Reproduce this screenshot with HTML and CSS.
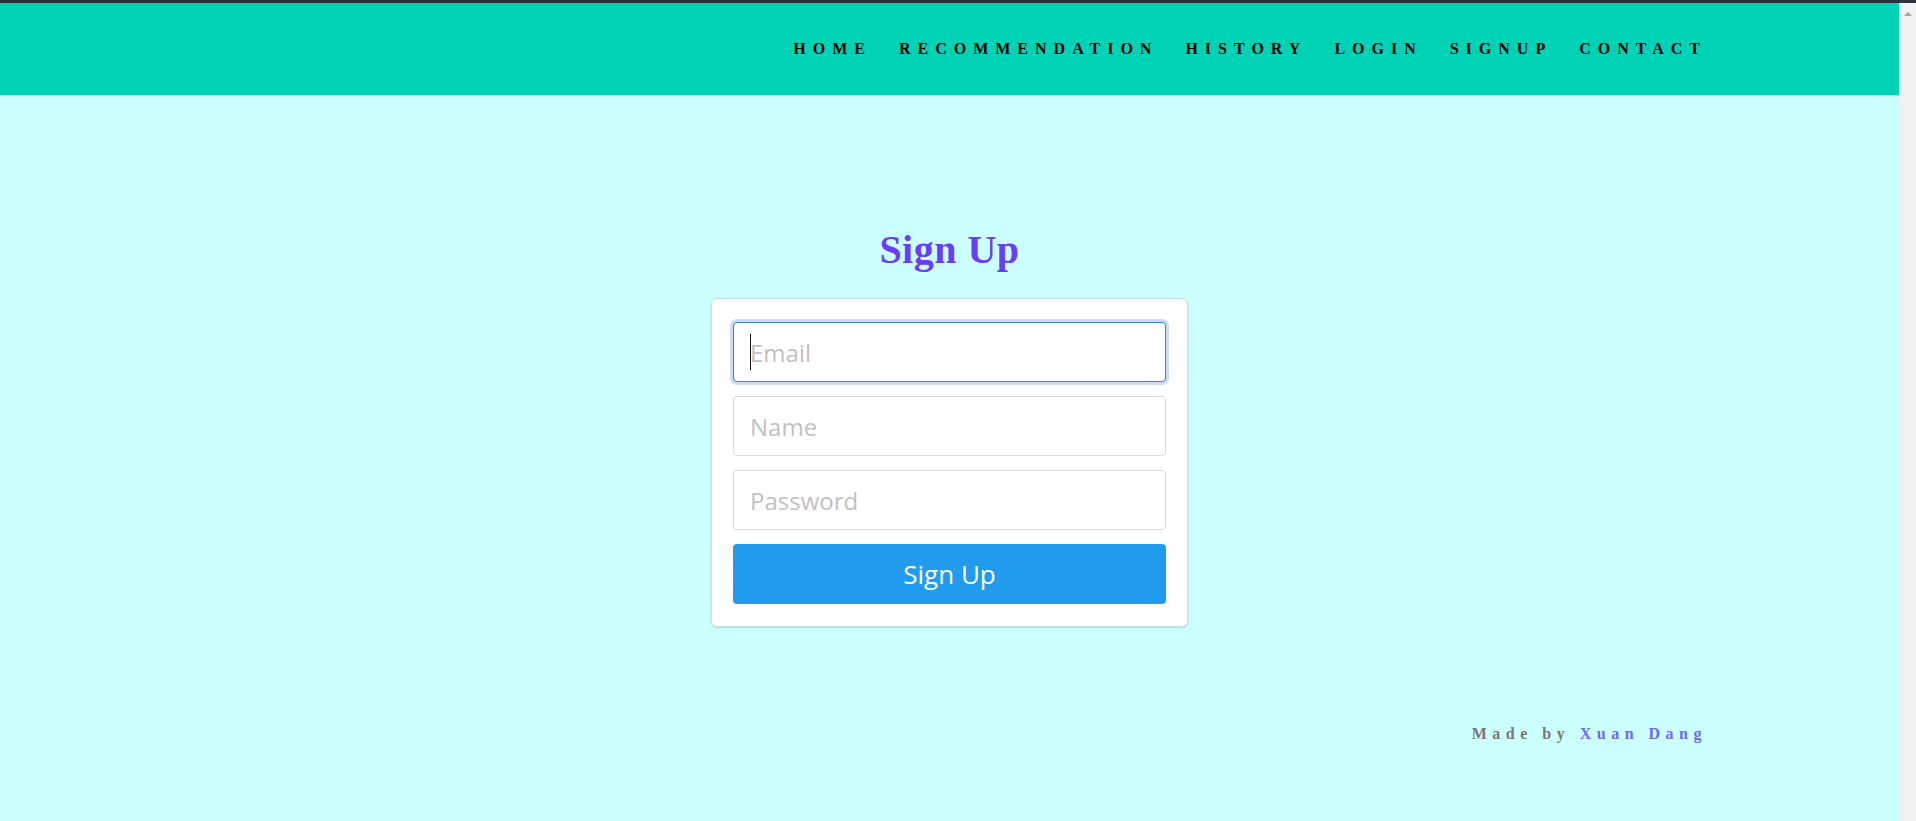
FILE: index.html
```html
<!DOCTYPE html>
<html lang="en">
<head>
<meta charset="utf-8">
<title>Sign Up</title>
<link rel="stylesheet" href="styles.css">
</head>
<body>
<div class="topline"></div>
<div class="frame">
  <div class="page">
    <header class="navbar">
      <nav class="nav">
        <a href="#" class="nav-link">HOME</a>
        <a href="#" class="nav-link">RECOMMENDATION</a>
        <a href="#" class="nav-link">HISTORY</a>
        <a href="#" class="nav-link">LOGIN</a>
        <a href="#" class="nav-link">SIGNUP</a>
        <a href="#" class="nav-link">CONTACT</a>
      </nav>
    </header>
    <main class="main">
      <h1 class="title">Sign Up</h1>
      <form class="card">
        <div class="field-wrap">
          <input class="field field-focused" type="email" placeholder="Email">
          <span class="caret"></span>
        </div>
        <input class="field" type="text" placeholder="Name">
        <input class="field" type="password" placeholder="Password">
        <button class="btn" type="button">Sign Up</button>
      </form>
    </main>
    <footer class="footer">
      <span class="made">Made by</span> <a href="#" class="author">Xuan Dang</a>
    </footer>
  </div>
  <div class="scrollbar"><span class="arrow-up"></span></div>
</div>
</body>
</html>
```
FILE: styles.css
```css
* { box-sizing: border-box; }
html, body { margin: 0; padding: 0; height: 100%; overflow: hidden; }
body { background: #ccffff; font-family: "Liberation Serif", "Times New Roman", serif; }

.topline { height: 3px; background: #2c333e; }

.frame { display: flex; height: 818px; }
.page { flex: 1; display: flex; flex-direction: column; min-width: 0; }

.navbar {
  height: 92px;
  background: #00d2b5;
  display: flex;
  align-items: center;
  justify-content: flex-end;
  padding-right: 192px;
}
.nav { display: flex; gap: 27px; }
.nav-link {
  font-family: "Liberation Serif", "Times New Roman", serif;
  font-weight: bold;
  font-size: 16px;
  letter-spacing: 7px;
  color: #000;
  text-decoration: none;
  line-height: 20px;
}

.main { display: flex; flex-direction: column; align-items: center; padding-top: 132px; }
.title {
  margin: 0 0 26px;
  font-family: "Liberation Serif", "Times New Roman", serif;
  font-weight: bold;
  font-size: 40px;
  line-height: 45px;
  letter-spacing: 0.5px;
  color: #6a3dfa;
}

.card {
  width: 477px;
  background: #fff;
  border: 1px solid #bfe4e6;
  border-radius: 6px;
  box-shadow: 0 1px 2px rgba(0, 0, 0, 0.14);
  padding: 23px 21px 22px;
  display: flex;
  flex-direction: column;
  gap: 14px;
}
.field-wrap { position: relative; }
.field {
  display: block;
  height: 60px;
  width: 100%;
  border: 1px solid #dadada;
  border-radius: 4px;
  padding: 0 16px;
  font-family: "Open Sans", sans-serif;
  font-size: 24px;
  color: #333;
  background: #fff;
  outline: none;
}
.field::placeholder { color: #c4c0c0; }
.field-focused {
  border-color: #3f7fe0;
  box-shadow: 0 0 0 3px #cddcf6;
}
.caret {
  position: absolute;
  left: 17px;
  top: 12px;
  width: 1px;
  height: 36px;
  background: #111;
}
.btn {
  height: 60px;
  border: none;
  border-radius: 4px;
  background: #219bed;
  color: #fff;
  font-family: "Open Sans", sans-serif;
  font-size: 26px;
  cursor: pointer;
}

.footer {
  margin-top: 97px;
  align-self: flex-end;
  padding-right: 192px;
  font-family: "Liberation Serif", "Times New Roman", serif;
  font-weight: bold;
  font-size: 16px;
  line-height: 20px;
  letter-spacing: 5.5px;
}
.made { color: #7a7575; }
.author { color: #6b6bf5; text-decoration: none; }

.scrollbar {
  width: 17px;
  background: #f1f1f1;
  display: flex;
  justify-content: center;
  padding-top: 9px;
}
.arrow-up {
  width: 0;
  height: 0;
  border-left: 4px solid transparent;
  border-right: 4px solid transparent;
  border-bottom: 4px solid #a3a3a3;
}
```
